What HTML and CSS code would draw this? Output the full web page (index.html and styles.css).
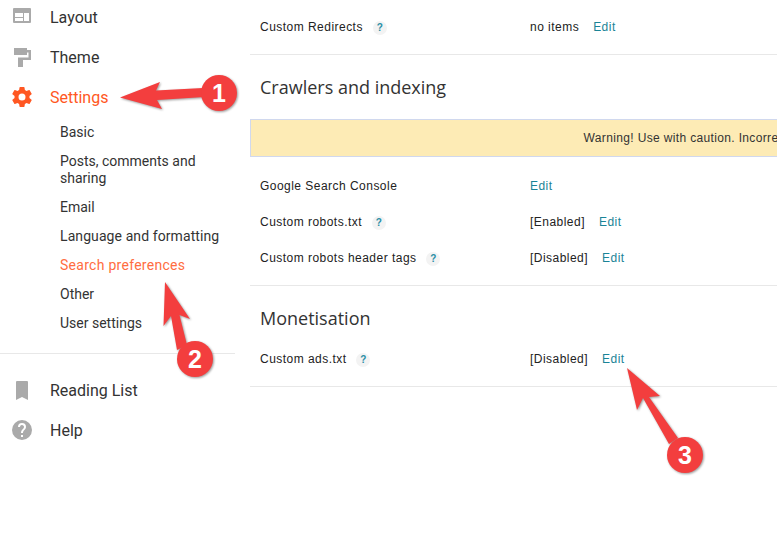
FILE: index.html
```html
<!DOCTYPE html>
<html lang="en">
<head>
<meta charset="utf-8">
<title>Search preferences</title>
<link rel="stylesheet" href="styles.css">
</head>
<body>
<div class="page">
  <aside class="sidebar">
    <nav class="nav-top">
      <a class="nav-item"><svg class="nav-icon" viewBox="0 0 20 20"><path fill="#aaa" fill-rule="evenodd" d="M2 1h16a1 1 0 0 1 1 1v13a1 1 0 0 1-1 1H2a1 1 0 0 1-1-1V2a1 1 0 0 1 1-1zm1 5v8h8v-3H3v-1h8V6H3zm9 0v8h5V6h-5z"/></svg><span>Layout</span></a>
      <a class="nav-item"><svg class="nav-icon" viewBox="0 0 20 20"><path fill="#aaa" d="M2 1h13v2h4v10h-8v7.500H6V10.500h10.500V5.500H15V8H2Z"/></svg><span>Theme</span></a>
      <a class="nav-item is-active"><svg class="nav-icon" viewBox="2 2 20 20"><path fill="#ff5722" d="M19.43 12.98c.04-.32.07-.64.07-.98s-.03-.66-.07-.98l2.11-1.65a.5.5 0 0 0 .12-.64l-2-3.46a.5.5 0 0 0-.61-.22l-2.49 1a7.3 7.3 0 0 0-1.69-.98l-.38-2.65A.49.49 0 0 0 14 2h-4a.49.49 0 0 0-.49.42l-.38 2.65c-.61.25-1.17.59-1.69.98l-2.49-1a.49.49 0 0 0-.61.22l-2 3.46a.49.49 0 0 0 .12.64l2.11 1.65c-.04.32-.07.65-.07.98s.03.66.07.98l-2.11 1.65a.5.5 0 0 0-.12.64l2 3.46c.12.22.39.3.61.22l2.49-1c.52.4 1.08.73 1.69.98l.38 2.65c.03.24.24.42.49.42h4c.25 0 .46-.18.49-.42l.38-2.65a7.7 7.7 0 0 0 1.69-.98l2.49 1c.23.09.49 0 .61-.22l2-3.46a.5.5 0 0 0-.12-.64l-2.11-1.65zM12 15.5a3.500 3.500 0 1 1 0-7 3.500 3.500 0 0 1 0 7z"/></svg><span>Settings</span></a>
    </nav>
    <ul class="subnav">
      <li>Basic</li>
      <li>Posts, comments and sharing</li>
      <li>Email</li>
      <li class="tracked">Language and formatting</li>
      <li class="is-active">Search preferences</li>
      <li>Other</li>
      <li>User settings</li>
    </ul>
    <nav class="nav-bottom">
      <a class="nav-item"><svg class="nav-icon" viewBox="0 0 20 20"><path fill="#aaa" d="M5 1h10a1 1 0 0 1 1 1v18l-6-3-6 3V2a1 1 0 0 1 1-1z"/></svg><span>Reading List</span></a>
      <a class="nav-item"><svg class="nav-icon" viewBox="2 2 20 20"><path fill="#aaa" d="M12 2a10 10 0 1 0 0 20 10 10 0 0 0 0-20zm1 17h-2v-2h2v2zm2.070-7.750-.9.920C13.450 12.900 13 13.500 13 15h-2v-.5c0-1.100.450-2.100 1.170-2.830l1.240-1.260A2 2 0 1 0 10 9H8a4 4 0 1 1 8 0c0 .880-.360 1.680-.930 2.250z"/></svg><span>Help</span></a>
    </nav>
  </aside>
  <main class="content">
    <section class="section section-first">
      <div class="row"><div class="label">Custom Redirects <span class="hint">?</span></div><div class="value"><span>no items</span><a class="edit">Edit</a></div></div>
    </section>
    <section class="section">
      <h2 class="heading">Crawlers and indexing</h2>
      <div class="warning">Warning! Use with caution. Incorrect use of these features can result in your blog being ignored by search engines.</div>
      <div class="row"><div class="label">Google Search Console</div><div class="value"><a class="edit">Edit</a></div></div>
      <div class="row"><div class="label">Custom robots.txt <span class="hint">?</span></div><div class="value"><span>[Enabled]</span><a class="edit">Edit</a></div></div>
      <div class="row"><div class="label">Custom robots header tags <span class="hint">?</span></div><div class="value"><span>[Disabled]</span><a class="edit">Edit</a></div></div>
    </section>
    <section class="section">
      <h2 class="heading heading-tight">Monetisation</h2>
      <div class="row"><div class="label">Custom ads.txt <span class="hint">?</span></div><div class="value"><span>[Disabled]</span><a class="edit">Edit</a></div></div>
    </section>
  </main>
  <svg class="callouts" viewBox="0 0 777 559" aria-hidden="true">
    <g class="arrow">
      <path d="M120 97.500 160 82 156 90.500 203 88 204 97 157 100 162 109Z"/>
      <circle cx="219" cy="93" r="18"/>
      <path d="M165 282 190 319 179.500 315 187 345 177 350 171 316 163.500 326Z"/>
      <circle cx="195" cy="359" r="18"/>
      <path d="M627 368 660 396 649 397 678 438 669 444 643 398 637 410Z"/>
      <circle cx="685" cy="455" r="18"/>
    </g>
    <text class="num" x="219" y="102">1</text>
    <text class="num" x="195" y="368">2</text>
    <text class="num" x="685" y="464">3</text>
  </svg>
</div>
</body>
</html>
```
FILE: styles.css
```css
* { box-sizing: border-box; }
html, body { margin: 0; height: 100%; overflow: hidden; background: #fff; }
.page { position: relative; display: flex; width: 777px; height: 559px; overflow: hidden; }

.sidebar { flex: 0 0 250px; width: 250px; font-family: Roboto, sans-serif; color: #222; margin-top: -3px; }
.nav-item { display: flex; align-items: center; height: 40px; padding-left: 12px; font-size: 16px; color: #333; }
.nav-item span { margin-left: 18px; }
.nav-icon { width: 20px; height: 20px; flex: none; }
.nav-item.is-active { color: #ff5722; }

.subnav { list-style: none; margin: 0; padding: 1px 8px 15px 60px; border-bottom: 1px solid #e8e8e8; width: 235px; }
.subnav li { font-size: 14px; line-height: 17px; padding: 6px 0; color: #333; }
.subnav li.tracked { letter-spacing: .09px; }
.subnav li.is-active { color: #ff6d3f; letter-spacing: .28px; }
.nav-bottom { margin-top: 16px; }

.content { flex: none; width: 1316px; font-family: "Liberation Sans", Arial, sans-serif; font-size: 12px; color: #222; }
.section { border-bottom: 1px solid #e8e8e8; padding-bottom: 9px; }
.section-first { padding-top: 9px; padding-bottom: 9px; }
.heading { margin: 0; padding: 20px 10px 19px; font-family: "Open Sans", sans-serif; font-weight: 400; font-size: 18px; line-height: 25px; color: #333; }
.heading-tight { padding-bottom: 10px; }
.warning { height: 38px; line-height: 36px; background: #fdebb5; border: 1px solid #d0d8ee; text-align: center; color: #333; margin-bottom: 11px; letter-spacing: .35px; }
.row { display: flex; align-items: center; height: 36px; padding-left: 10px; letter-spacing: .47px; }
.label { width: 270px; flex: none; }
.hint { display: inline-block; width: 14px; height: 14px; margin-left: 6px; border-radius: 50%; background: #f3f3f3; color: #2a8ea6; font-size: 10px; font-weight: 700; line-height: 14px; text-align: center; letter-spacing: 0; }
.value { display: flex; gap: 14px; }
.edit { color: #1a8497; }

.callouts { position: absolute; inset: 0; width: 777px; height: 559px; pointer-events: none; }
.arrow { fill: #f33e3e; filter: drop-shadow(1px 1px 1px rgba(0,0,0,.4)); }
.num { font-family: "Liberation Sans", Arial, sans-serif; font-weight: 700; font-size: 25px; fill: #fff; text-anchor: middle; }
```
